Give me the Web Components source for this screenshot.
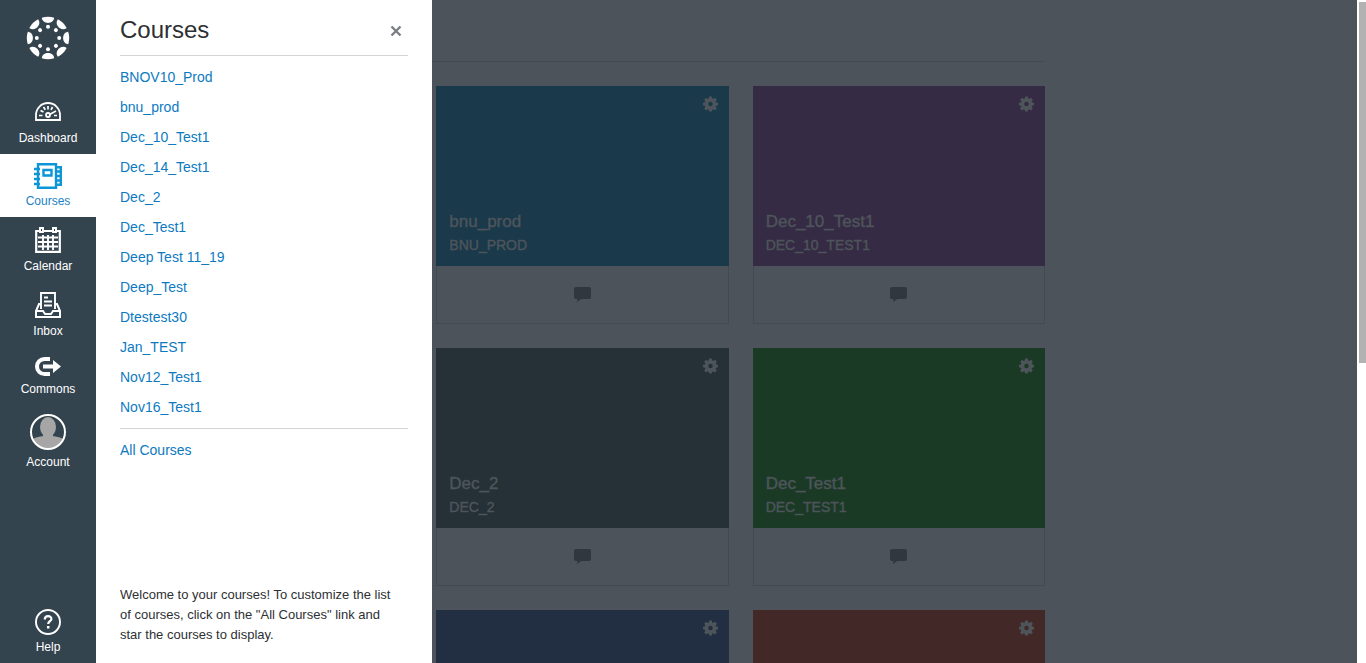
<!DOCTYPE html>
<html lang="en">
<head>
<meta charset="utf-8">
<title>Dashboard</title>
<style>
html, body { margin: 0; height: 100%; overflow: hidden; }
body { font-family: "Liberation Sans", Arial, sans-serif; background: #4c535a; }
</style>
</head>
<body>
<canvas-app></canvas-app>

<template id="t-app">
<style>
:host { display: flex; height: 100vh; position: relative; overflow: hidden; }
global-nav { flex: 0 0 96px; }
main { flex: 1; min-width: 0; display: flex; gap: 24px; padding: 0 0 0 24px; box-sizing: border-box; overflow: hidden; }
.content { flex: 1; min-width: 0; }
aside { flex: 0 0 288px; }
header { height: 61px; border-bottom: 1px solid #434a52; margin-bottom: 24px; }
.grid { display: grid; grid-template-columns: repeat(3, 1fr); gap: 24px; }
.grid > :nth-child(odd) { grid-column: 2; }
course-tray { position: absolute; left: 96px; top: 0; bottom: 0; width: 336px; }
.scroll { flex: 0 0 9px; background: #fff; padding: 2px 0 0 2px; box-sizing: border-box; }
.thumb { height: 361px; background: #b2b2b2; }
</style>
<global-nav></global-nav>
<main>
  <div class="content">
    <header></header>
    <div class="grid">
      <course-card color="#1a394b"><span slot="name">bnu_prod</span><span slot="code">BNU_PROD</span></course-card>
      <course-card color="#362b44"><span slot="name">Dec_10_Test1</span><span slot="code">DEC_10_TEST1</span></course-card>
      <course-card color="#253137"><span slot="name">Dec_2</span><span slot="code">DEC_2</span></course-card>
      <course-card color="#1b3a26"><span slot="name">Dec_Test1</span><span slot="code">DEC_TEST1</span></course-card>
      <course-card color="#222e41"></course-card>
      <course-card color="#432828"></course-card>
    </div>
  </div>
  <aside></aside>
</main>
<div class="scroll"><div class="thumb"></div></div>
<course-tray></course-tray>
</template>

<template id="t-card">
<style>
:host { display: block; }
.hero { height: 180px; box-sizing: border-box; padding: 10px 11px 9px 13px; display: flex; flex-direction: column; justify-content: space-between; color: #4d555b; }
button { all: unset; align-self: flex-end; width: 15px; height: 16px; display: flex; }
svg { display: block; }
h2 { margin: 0; font-size: 17px; line-height: 23px; font-weight: 400; }
p { margin: 0; font-size: 14px; line-height: 24px; }
h2, p { min-height: 23px; -webkit-text-stroke: 0.4px currentColor; }
.foot { height: 58px; box-sizing: border-box; border: 1px solid #434a52; border-top: 0; display: flex; justify-content: center; align-items: center; }
</style>
<div class="hero">
  <button aria-label="Course settings"><svg width="15" height="16" viewBox="0 0 16 16"><path fill="currentColor" fill-rule="evenodd" d="M6.600 0h2.800l.5 2.200 1 .4 1.900-1.200 2 2-1.300 1.900.4 1 2.100.4v2.700l-2.100.5-.4 1 1.200 1.900-2 2-1.800-1.300-1 .5L9.400 16H6.600l-.5-2-1-.5-1.900 1.300-2-2 1.300-1.900-.4-1L0 9.400V6.700l2.100-.4.4-1-1.200-1.900 2-2 1.800 1.200 1-.4zM8 5.600a2.400 2.400 0 1 0 0 4.800 2.400 2.400 0 0 0 0-4.800z"/></svg></button>
  <div><h2><slot name="name"></slot></h2><p><slot name="code"></slot></p></div>
</div>
<div class="foot"><svg width="17" height="15" viewBox="0 0 17 15"><path fill="#30373f" d="M2 0h13q2 0 2 2v8q0 2-2 2H7.500L3 15l.5-3H2q-2 0-2-2V2q0-2 2-2z"/></svg></div>
</template>

<template id="t-tray">
<style>
:host { display: flex; flex-direction: column; background: #fff; box-sizing: border-box; padding: 0 24px 18px; color: #2d3033; }
header { height: 56px; box-sizing: border-box; border-bottom: 1px solid #d2d4d6; display: flex; justify-content: space-between; align-items: center; padding-top: 5px; }
h1 { margin: 0; font-size: 24px; line-height: 36px; font-weight: 400; }
button { all: unset; display: flex; padding: 7px 6px 5px; }
ul { list-style: none; margin: 0; padding: 6px 0; }
ul.all { border-top: 1px solid #d2d4d6; }
li { height: 30px; line-height: 30px; font-size: 14px; }
a { color: #0d7abf; text-decoration: none; }
p { margin: auto 0 0; padding-right: 8px; font-size: 13px; line-height: 20px; }
</style>
<header><h1>Courses</h1><button aria-label="Close"><svg width="12" height="12" viewBox="0 0 12 12"><path d="M1.500 1.500l9 9M10.500 1.500l-9 9" stroke="#7b7f83" stroke-width="2.400"/></svg></button></header>
<ul class="list"></ul>
<ul class="all"><li><a href="#all">All Courses</a></li></ul>
<p>Welcome to your courses! To customize the list of courses, click on the "All Courses" link and star the courses to display.</p>
</template>

<template id="t-nav">
<style>
:host { display: flex; flex-direction: column; background: #34444f; }
.logo { height: 91px; box-sizing: border-box; padding-top: 16px; display: flex; justify-content: center; align-items: flex-start; }
.help { margin-top: auto; }
</style>
<a class="logo" href="#home" aria-label="Home"><svg class="mark" width="44" height="44" viewBox="-22 -22 44 44" fill="#fff"></svg></a>
<nav-item h="63"><svg slot="icon" width="26" height="24" viewBox="0 0 26 24" fill="none" stroke="#fff" stroke-width="1.800"><path d="M1 18V13a12 12 0 0 1 24 0v5z"/><circle cx="13" cy="13" r="2"/><path d="M15 12.200l6-3.200M4 13.500h3.500M19 13.500h3M5.500 8.500l3 1.600M8.500 5l1.800 2.800M13 4v3.500M17.500 5l-1.500 2.800" stroke-width="1.700"/></svg>Dashboard</nav-item>
<nav-item h="63" active><svg slot="icon" width="28" height="26" viewBox="0 0 28 26" fill="none" stroke="#0c96d8" stroke-width="2.400"><path d="M4 1.200h18v23.600H4zM0 6h6M0 11h6M0 16h6M0 21h6M9.500 7h8v5.500h-8zM22 4.200h4.800v17.600H22M22 8.500h5M22 13h5M22 17.500h5"/></svg>Courses</nav-item>
<nav-item h="65"><svg slot="icon" width="26" height="27" viewBox="0 0 26 27" fill="none" stroke="#fff"><path stroke-width="2.200" d="M1 4h3M9 4h8M22 4h3M1.200 3v21.800h23.600V3"/><path stroke-width="1.900" d="M5 1h3v4H5zM18 1h3v4h-3zM8 8v15M13 8v15M18 8v15M3 10.500h20M3 15h20M3 19.500h20"/></svg>Calendar</nav-item>
<nav-item h="65"><svg slot="icon" width="26" height="27" viewBox="0 0 26 27" fill="none" stroke="#fff" stroke-width="2"><path d="M6 17V1h14v16M9 5.500h4M9 9.500h8M9 13.500h8" stroke-width="1.900"/><path d="M6 12H4l-3 7v6h24v-6l-3-7h-2M1 19h7l2 3h6l2-3h7" stroke-width="2"/></svg>Inbox</nav-item>
<nav-item h="58"><svg slot="icon" width="26" height="20" viewBox="0 0 26 20"><path fill="none" stroke="#fff" stroke-width="4" d="M15 2H9.500a7.500 7.500 0 0 0 0 15H15"/><path fill="#fff" d="M8 7.500h10V3l8 6.500-8 6.500v-4.500H8z"/></svg>Commons</nav-item>
<nav-item h="73"><svg slot="icon" width="36" height="36" viewBox="0 0 36 36"><defs><clipPath id="c"><circle cx="18" cy="18" r="17"/></clipPath></defs><g clip-path="url(#c)" fill="#a6a6a6"><ellipse cx="18" cy="13" rx="8" ry="10"/><path d="M13 19h10v5h-10zM1 36V26q4-3 12-4 5 3 10 0 8 1 12 4v10z"/></g><circle cx="18" cy="18" r="17" fill="none" stroke="#fff" stroke-width="2"/></svg>Account</nav-item>
<nav-item class="help" h="63"><svg slot="icon" width="26" height="26" viewBox="0 0 26 26" fill="none" stroke="#fff"><circle cx="13" cy="13" r="12" stroke-width="1.900"/><path d="M9.800 10.500c0-4.500 6.600-4.300 6.600-.6 0 2.200-3.200 2.500-3.200 5.100" stroke-width="2.200"/><path d="M13.200 17v2.500" stroke-width="2.500"/></svg>Help</nav-item>
</template>

<template id="t-item">
<style>
:host { display: block; }
a { height: 100%; box-sizing: border-box; padding-bottom: 7px; display: flex; flex-direction: column; align-items: center; justify-content: flex-end; gap: 3px; color: #fff; text-decoration: none; font-size: 12px; line-height: 18px; }
:host([active]) a { background: #fff; color: #1b82c4; }
</style>
<a><slot name="icon"></slot><span><slot></slot></span></a>
</template>

<script>
class Base extends HTMLElement {
  constructor() {
    super();
    this.attachShadow({ mode: "open" }).append(document.getElementById(this.constructor.template).content.cloneNode(true));
  }
}
class NavItem extends Base {
  static template = "t-item";
  connectedCallback() {
    this.style.height = this.getAttribute("h") + "px";
    this.shadowRoot.querySelector("a").href = "#nav";
  }
}
class CourseCard extends Base {
  static template = "t-card";
  connectedCallback() { this.shadowRoot.querySelector(".hero").style.background = this.getAttribute("color"); }
}
class CourseTray extends Base {
  static template = "t-tray";
  connectedCallback() {
    const names = ["BNOV10_Prod", "bnu_prod", "Dec_10_Test1", "Dec_14_Test1", "Dec_2", "Dec_Test1", "Deep Test 11_19", "Deep_Test", "Dtestest30", "Jan_TEST", "Nov12_Test1", "Nov16_Test1"];
    this.shadowRoot.querySelector(".list").innerHTML = names.map(n => `<li><a href="#course">${n}</a></li>`).join("");
  }
}
class GlobalNav extends Base {
  static template = "t-nav";
  connectedCallback() {
    // Eight segments round a ring, each with a dot inside it.
    let s = "";
    for (let i = 0; i < 8; i++)
      s += `<g transform="rotate(${i * 45})"><path d="M-6.200-20.200Q0-22.200 6.200-20.200C5.600-13.400-5.600-13.400-6.200-20.200z"/><circle cy="-11.200" r="2"/></g>`;
    this.shadowRoot.querySelector(".mark").innerHTML = s;
  }
}
class CanvasApp extends Base { static template = "t-app"; }
customElements.define("nav-item", NavItem);
customElements.define("course-card", CourseCard);
customElements.define("course-tray", CourseTray);
customElements.define("global-nav", GlobalNav);
customElements.define("canvas-app", CanvasApp);
</script>
</body>
</html>
